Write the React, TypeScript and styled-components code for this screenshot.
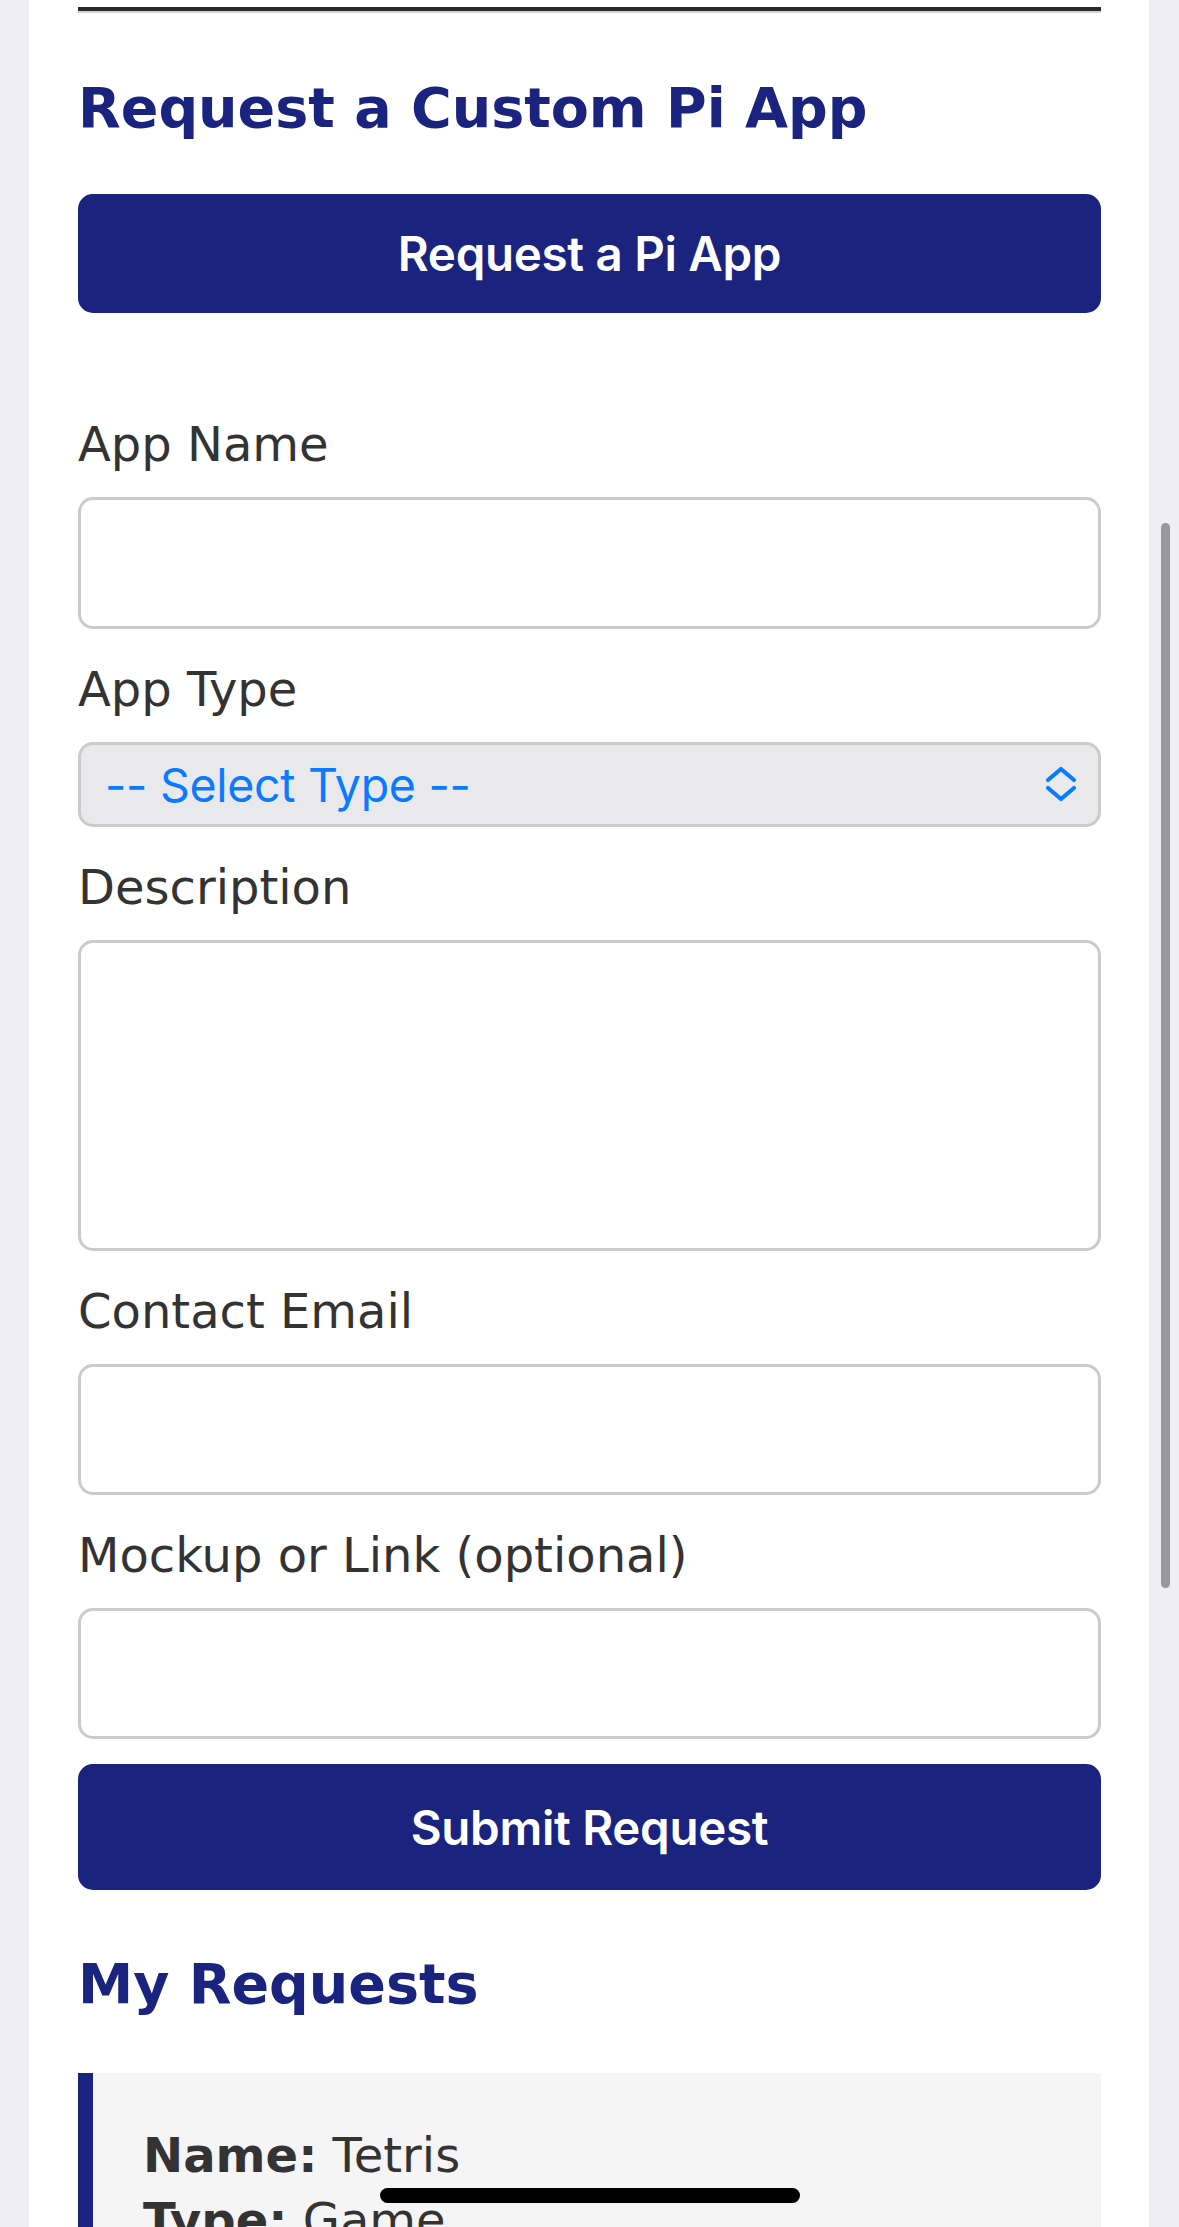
import React from "react";
import styled, { createGlobalStyle } from "styled-components";

const navy = "#1a237e";

const GlobalStyle = createGlobalStyle`
  html, body {
    margin: 0;
    padding: 0;
    background: #efeef4;
    overflow: hidden;
  }

  body {
    font-family: "DejaVu Sans", Verdana, sans-serif;
    color: #333;
  }

  * {
    box-sizing: border-box;
  }
`;

const appTypes = ["Game", "Utility", "Social", "Marketplace", "Other"];

const myRequests = [
  { name: "Tetris", type: "Game", status: "Pending" },
];

export default function App() {
  return (
    <>
      <GlobalStyle />
      <Page>
        <Panel>
          <Divider />

          <Heading>Request a Custom Pi App</Heading>
          <PrimaryButton type="button" $height={119}>Request a Pi App</PrimaryButton>

          <Form onSubmit={(e) => e.preventDefault()}>
            <Label htmlFor="app-name">App Name</Label>
            <TextInput id="app-name" type="text" $height={132} />

            <Label htmlFor="app-type">App Type</Label>
            <SelectWrap>
              <Select id="app-type" defaultValue="">
                <option value="">-- Select Type --</option>
                {appTypes.map((t) => (
                  <option key={t} value={t}>{t}</option>
                ))}
              </Select>
              <Chevrons viewBox="0 0 34 38" aria-hidden="true">
                <path d="M4 15 L17 4 L30 15" />
                <path d="M4 23 L17 34 L30 23" />
              </Chevrons>
            </SelectWrap>

            <Label htmlFor="description">Description</Label>
            <TextArea id="description" />

            <Label htmlFor="email">Contact Email</Label>
            <TextInput id="email" type="email" $height={131} />

            <Label htmlFor="mockup">Mockup or Link (optional)</Label>
            <TextInput id="mockup" type="text" $height={131} />

            <PrimaryButton type="submit" $height={126}>Submit Request</PrimaryButton>
          </Form>

          <Heading $top={61} $bottom={57}>My Requests</Heading>

          {myRequests.map((r, i) => (
            <RequestCard key={i}>
              <Line><b>Name:</b> {r.name}</Line>
              <Line><b>Type:</b> {r.type}</Line>
              <Line><b>Status:</b> {r.status}</Line>
            </RequestCard>
          ))}
        </Panel>
      </Page>

      <ScrollThumb />
      <HomeIndicator />
    </>
  );
}

const Page = styled.div`
  padding: 0 30px 0 29px;
`;

const Panel = styled.main`
  background: #fff;
  min-height: 2400px;
  padding: 7px 48px 60px 49px;
`;

const Divider = styled.div`
  height: 6px;
  border-top: 4px solid #2a2a2a;
  background: #d2d2d2;
`;

const Heading = styled.h3<{ $top?: number; $bottom?: number }>`
  font-family: "DejaVu Sans", Verdana, sans-serif;
  font-weight: 700;
  font-size: 55.5px;
  line-height: 65px;
  color: ${navy};
  margin: ${(p) => p.$top ?? 62}px 0 ${(p) => p.$bottom ?? 54}px;
`;

const PrimaryButton = styled.button<{ $height: number }>`
  display: block;
  width: 100%;
  height: ${(p) => p.$height}px;
  border: none;
  border-radius: 15px;
  background: ${navy};
  color: #fff;
  font-family: Inter, "Noto Sans", sans-serif;
  font-weight: 600;
  font-size: 47.5px;
  letter-spacing: -0.3px;
  cursor: pointer;
`;

const Form = styled.form`
  display: flex;
  flex-direction: column;
  padding-top: 96px;
`;

const Label = styled.label`
  display: block;
  font-size: 48px;
  line-height: 56px;
  color: #333;
  margin: 7px 0 25px;
`;

const fieldBase = `
  display: block;
  width: 100%;
  border: 3px solid #cbcbcb;
  border-radius: 15px;
  background: #fff;
  font-family: "DejaVu Sans", Verdana, sans-serif;
  font-size: 48px;
  color: #333;
  padding: 0 26px;
  margin: 0 0 25px;
  outline: none;
`;

const TextInput = styled.input<{ $height: number }>`
  ${fieldBase}
  height: ${(p) => p.$height}px;
`;

const TextArea = styled.textarea`
  ${fieldBase}
  height: 311px;
  padding-top: 20px;
  resize: none;
`;

const SelectWrap = styled.div`
  position: relative;
  margin: 0 0 25px;
`;

const Select = styled.select`
  ${fieldBase}
  appearance: none;
  -webkit-appearance: none;
  height: 85px;
  margin: 0;
  padding-left: 24px;
  background: #e9e9eb;
  color: #0a7aff;
  font-family: Inter, "Noto Sans", sans-serif;
  font-size: 46.5px;
  letter-spacing: -0.3px;
`;

const Chevrons = styled.svg`
  position: absolute;
  right: 23px;
  top: 23px;
  width: 34px;
  height: 38px;
  fill: none;
  stroke: #0a7aff;
  stroke-width: 4.2;
  stroke-linecap: round;
  stroke-linejoin: round;
  pointer-events: none;
`;

const RequestCard = styled.section`
  background: #f5f5f5;
  border-left: 15px solid ${navy};
  padding: 50px;
`;

const Line = styled.div`
  font-size: 48px;
  line-height: 65px;
  color: #333;

  b {
    font-weight: 700;
  }
`;

const ScrollThumb = styled.div`
  position: fixed;
  top: 523px;
  right: 9px;
  width: 9px;
  height: 1065px;
  border-radius: 5px;
  background: #98989e;
`;

const HomeIndicator = styled.div`
  position: fixed;
  left: 50%;
  bottom: 24px;
  width: 420px;
  height: 15px;
  transform: translateX(-50%);
  border-radius: 8px;
  background: #000;
`;
